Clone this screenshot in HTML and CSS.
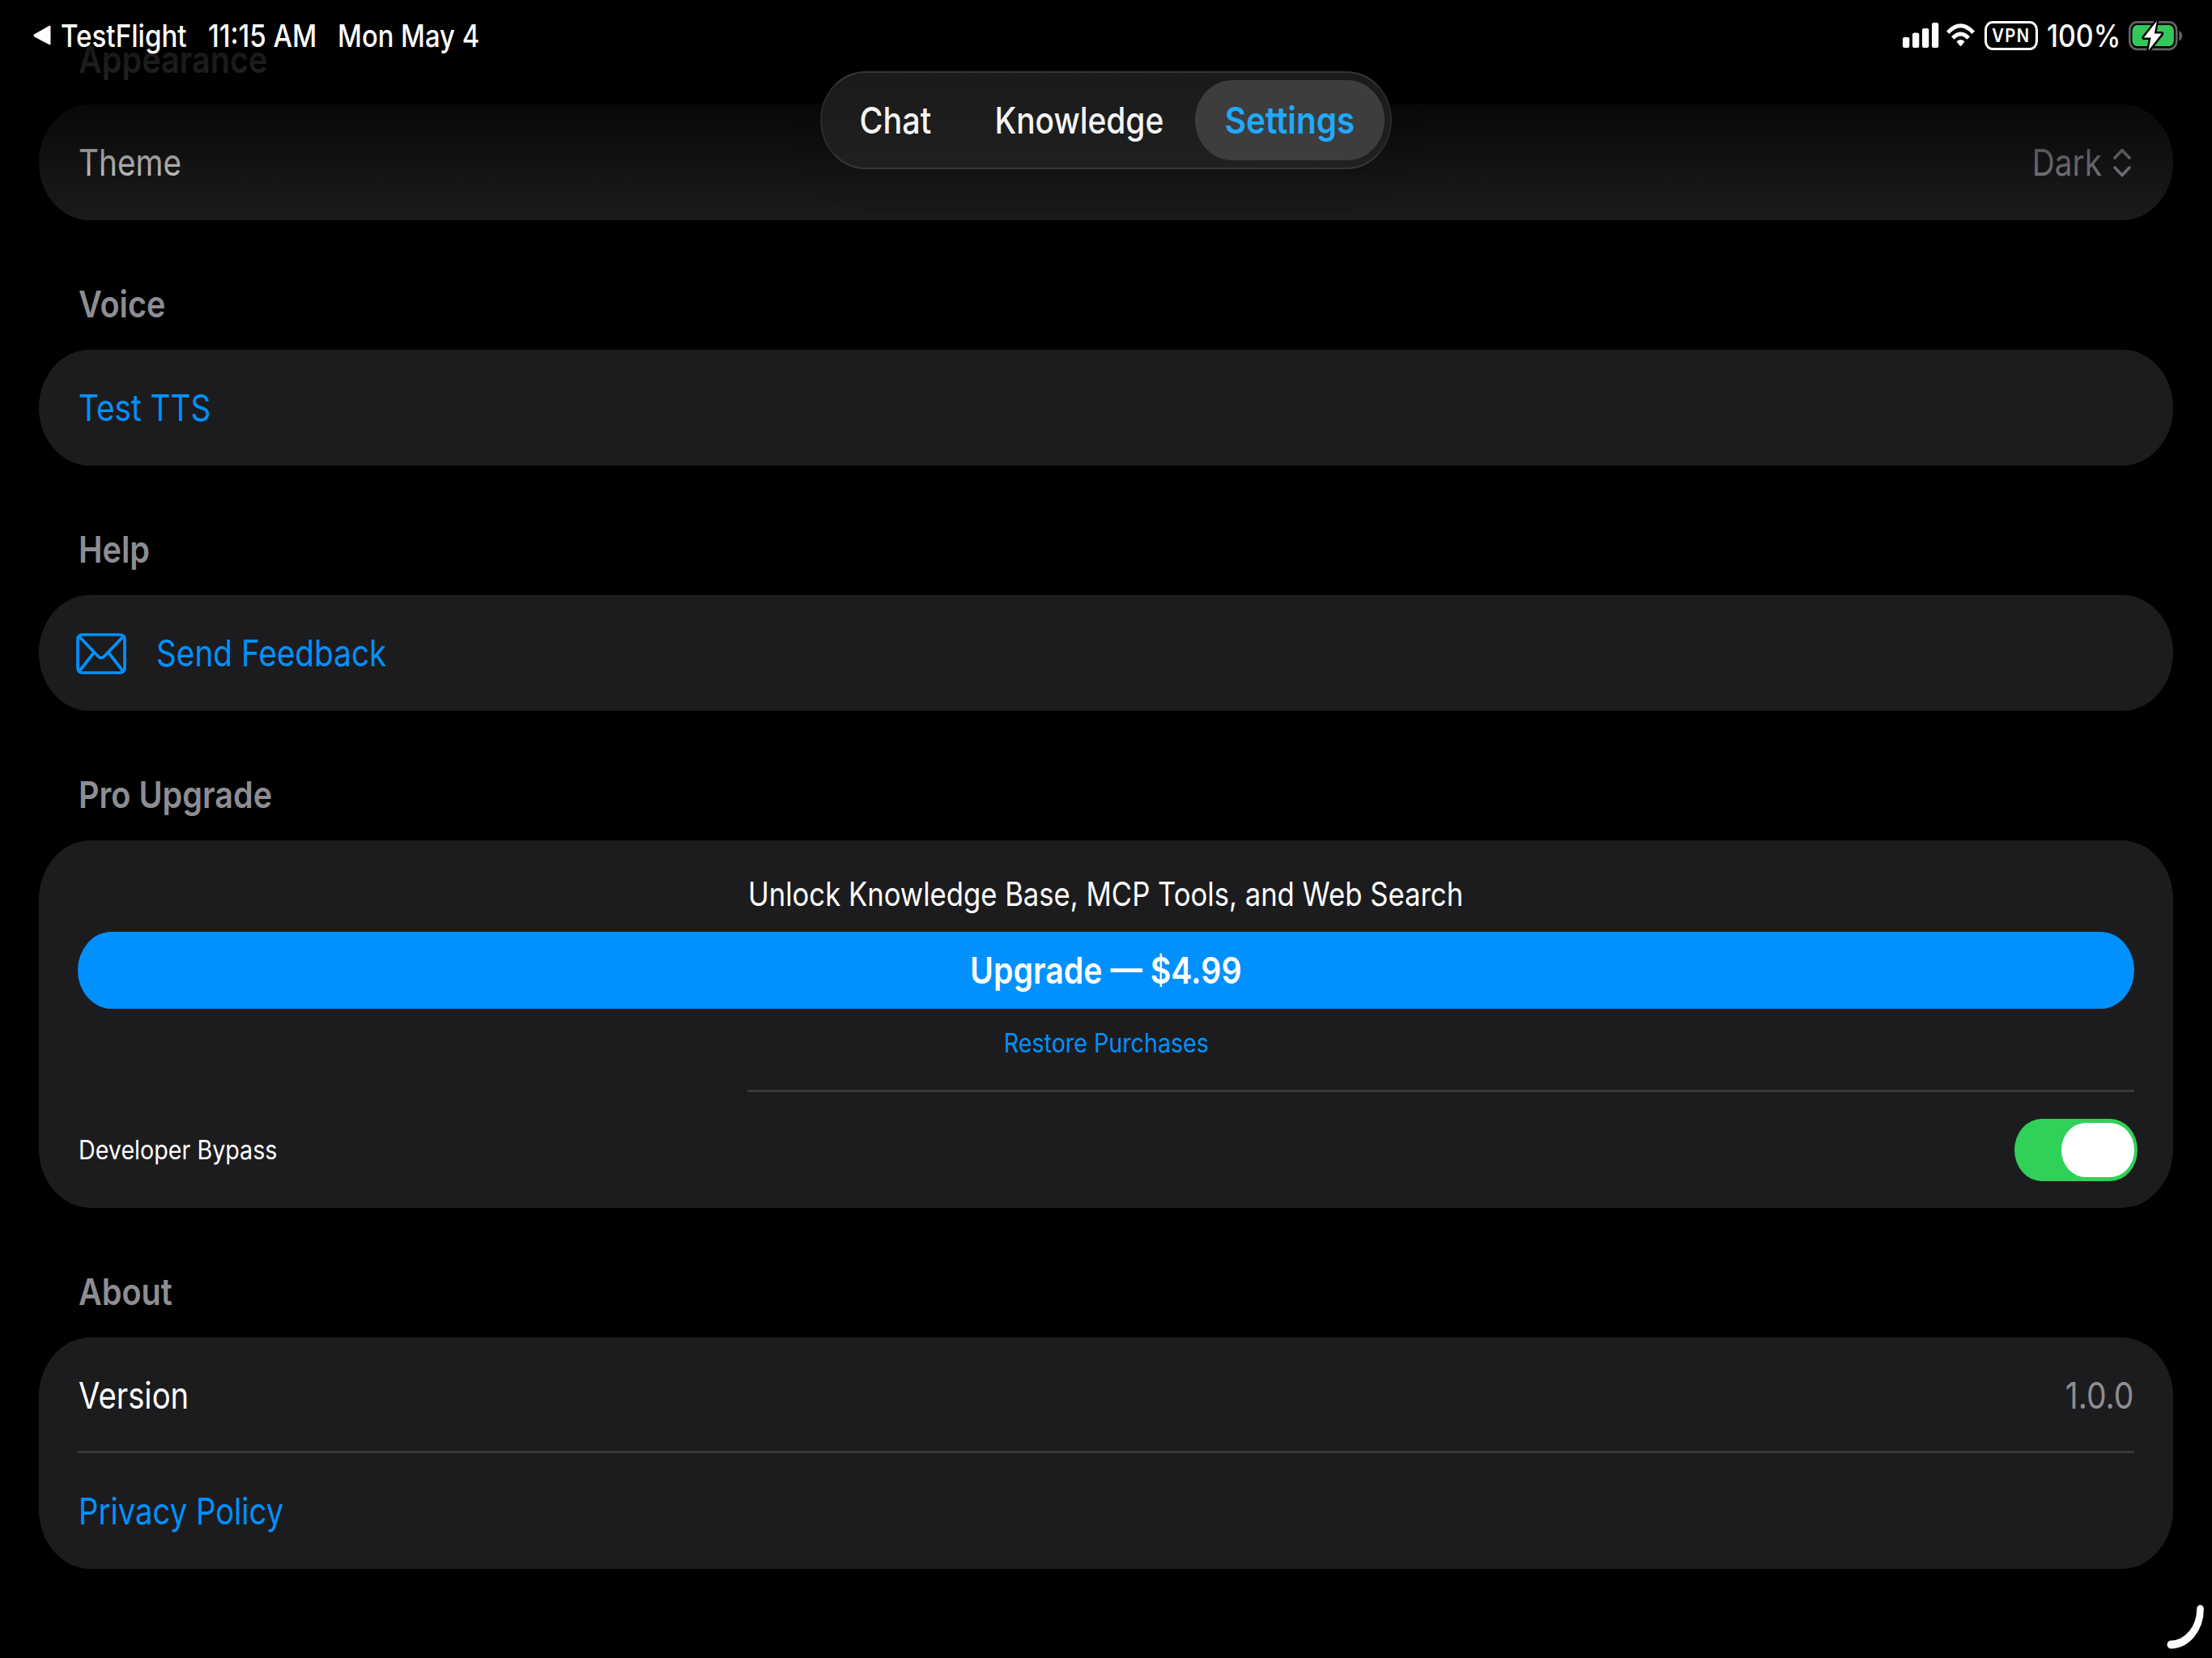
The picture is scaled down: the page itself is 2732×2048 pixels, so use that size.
FILE: index.html
```html
<!DOCTYPE html><html lang="en">
<head>
  <meta charset="UTF-8">
  <meta name="viewport" content="width=device-width, initial-scale=1.0">
  <title>Settings</title>
  <link rel="stylesheet" href="styles.css">
</head>
<body>
  <main class="settings">
    <h2 class="first"><span class="txt">Appearance</span></h2>
    <div class="card">
      <div class="row">
        <span class="txt body">Theme</span>
        <div class="picker">
          <span class="txt body end">Dark</span>
          <svg width="22" height="36" viewBox="0 0 22 36"><path d="M2 12L11 2.5L20 12M2 24L11 33.5L20 24"/></svg>
        </div>
      </div>
    </div>

    <h2><span class="txt">Voice</span></h2>
    <div class="card">
      <div class="row link"><span class="txt body">Test TTS</span></div>
    </div>

    <h2><span class="txt">Help</span></h2>
    <div class="card">
      <div class="row link feedback">
        <svg width="62" height="51" viewBox="0 0 62 51">
          <rect x="2" y="2" width="58" height="47" rx="5.5"/>
          <path d="M4.5 5L27 28.5Q31 33 35 28.5L57.5 5M22 24L4.5 46.5M40 24L57.5 46.5"/>
        </svg>
        <span class="txt body">Send Feedback</span>
      </div>
    </div>

    <h2><span class="txt">Pro Upgrade</span></h2>
    <div class="card pro">
      <p><span class="txt center">Unlock Knowledge Base, MCP Tools, and Web Search</span></p>
      <button class="upgrade"><span class="txt center">Upgrade — $4.99</span></button>
      <a class="restore"><span class="txt center small">Restore Purchases</span></a>
      <div class="line inset"></div>
      <div class="row bypass">
        <span class="txt small">Developer Bypass</span>
        <div class="toggle"><div class="knob"></div></div>
      </div>
    </div>

    <h2><span class="txt">About</span></h2>
    <div class="card about">
      <div class="row">
        <span class="txt body version">Version</span>
        <span class="txt end number">1.0.0</span>
      </div>
      <div class="line"></div>
      <div class="row link"><span class="txt body version">Privacy Policy</span></div>
    </div>
  </main>

  <div class="fade"></div>

  <header class="status">
    <div class="status-left">
      <svg width="22" height="26" viewBox="0 0 22 26"><path d="M21.5 1.8V23.2Q21.5 25 19.5 24L1.5 14.5Q-.5 12.8 1.5 11.2L19.5 .9Q21.5 0 21.5 1.8Z" fill="#fff"/></svg>
      <span class="txt">TestFlight</span>
      <span class="txt">11:15 AM</span>
      <span class="txt date">Mon May 4</span>
    </div>
    <div class="status-right">
      <svg width="45" height="32" viewBox="0 0 45 32" fill="#fff">
        <rect x="0" y="18" width="8.3" height="13" rx="2.2"/>
        <rect x="12" y="12.4" width="8.3" height="18.6" rx="2.2"/>
        <rect x="24" y="7" width="8.3" height="24" rx="2.2"/>
        <rect x="36" y="0" width="8.3" height="31" rx="2.2"/>
      </svg>
      <svg width="36" height="30" viewBox="0 0 36 30" fill="none" stroke="#fff" stroke-width="5">
        <path d="M1.8 11.2Q17.5 -5.6 33.2 11.2"/>
        <path d="M7.8 18Q17.5 7.8 27.2 18"/>
        <path d="M12.4 22.2Q17.5 17.8 22.6 22.2L18.4 27.4Q17.5 28.4 16.6 27.4Z" fill="#fff" stroke="none"/>
      </svg>
      <div class="vpn"><span class="txt center">VPN</span></div>
      <span class="txt percent">100%</span>
      <svg width="68" height="38" viewBox="0 0 68 38">
        <rect x="1.3" y="2.3" width="58" height="33.6" rx="9" ry="10" fill="none" stroke="#626264" stroke-width="2.7"/>
        <path d="M62.3 13C67.5 15 67.5 23.5 62.3 25.5Z" fill="#626264"/>
        <rect x="4.5" y="6" width="51.4" height="26" rx="6" ry="7" fill="#34c759"/>
        <path d="M34.8 1L18.8 21.6H27.6L24.6 37.2L40.8 16.6H31.8Z" fill="#fff" stroke="#000" stroke-width="5" paint-order="stroke" stroke-linejoin="round"/>
      </svg>
    </div>
  </header>

  <nav class="tabs">
    <a><span class="txt center chat">Chat</span></a>
    <a><span class="txt center">Knowledge</span></a>
    <a class="active"><span class="txt center">Settings</span></a>
  </nav>

  <svg class="corner" width="60" height="68" viewBox="0 0 24.9 24.7" preserveAspectRatio="none"><path d="M18.9 2.7A15.3 16 0 0 1 3.7 18.7"/></svg>
</body>
</html>
```
FILE: styles.css
```css
* { box-sizing: border-box; }
body {
  font-family: Inter, sans-serif;
  font-size: 45.4px;
  background: #000;
  color: #fff;
  margin: 0;
  width: 2732px;
  height: 2048px;
  position: relative;
  overflow: hidden;
}
svg { display: block; flex: none; }

/* condensed text */
.txt {
  --sx: 0.872;
  display: inline-block;
  white-space: nowrap;
  transform: scaleX(var(--sx));
  transform-origin: left center;
}
.txt.body { --sx: 0.853; }
.txt.version { --sx: 0.843; }
.txt.number { --sx: 0.86; }
.txt.small { --sx: 0.896; }
.txt.end { transform-origin: right center; }
.txt.center { transform-origin: center; }

.settings { padding: 0 48.3px; }
h2 {
  margin: 0;
  padding: 73.9px 49px 25.9px;
  font-size: 45.4px;
  line-height: 60px;
  font-weight: 600;
  color: #8d8d93;
}
h2.first { padding-top: 43.6px; }
.card {
  background: #1c1c1e;
  border-radius: 64px / 73px;
  padding: 0 48px;
}
.row {
  display: flex;
  align-items: center;
  justify-content: space-between;
  height: 143px;
}
.row > .txt:first-child { margin-left: 1px; }
.link { color: #0091ff; }
.picker {
  display: flex;
  align-items: center;
  gap: 13.5px;
  margin-right: 4px;
  color: #98989f;
}
.picker svg {
  fill: none;
  stroke: #98989f;
  stroke-width: 3.6;
  stroke-linecap: round;
  stroke-linejoin: round;
}
.feedback {
  justify-content: flex-start;
  gap: 37px;
  margin-left: -2.5px;
}
.feedback svg {
  fill: none;
  stroke: #0091ff;
  stroke-width: 3.7;
  margin-top: 1px;
}
.line {
  height: 3px;
  margin-top: -3px;
  background: #38383a;
}
.number { color: #8e8e90; }

.pro {
  display: flex;
  flex-direction: column;
  height: 454.5px;
  padding-top: 42.6px;
}
.pro p {
  margin: 0;
  text-align: center;
  font-size: 40.3px;
  line-height: 50px;
}
.pro p .txt { --sx: 0.86; }
.upgrade {
  margin: 20.3px 0 20.4px;
  padding: 0;
  height: 95.4px;
  border: none;
  border-radius: 42px / 47.7px;
  background: #0091ff;
  color: #fff;
  font: 600 45.4px Inter, sans-serif;
}
.upgrade .txt { --sx: 0.866; }
.restore {
  text-align: center;
  font-size: 32px;
  line-height: 44px;
  color: #0091ff;
}
.inset { margin: 35.3px 0 0 827px; }
.bypass { font-size: 32px; }
.toggle {
  width: 152px;
  height: 77.5px;
  margin-right: -4.5px;
  padding: 5.4px 4.6px;
  border-radius: 34px / 38.7px;
  background: #30d158;
}
.knob {
  width: 90px;
  height: 66.6px;
  margin-left: auto;
  border-radius: 30px / 33.3px;
  background: #fff;
}

.fade {
  position: absolute;
  inset: 0 0 auto 0;
  height: 300px;
  background: linear-gradient(rgba(0,0,0,.86) 0, rgba(0,0,0,.81) 75px, rgba(0,0,0,.7) 129px, rgba(0,0,0,.44) 185px, rgba(0,0,0,.27) 218px, rgba(0,0,0,.06) 272px, rgba(0,0,0,0) 300px);
}
.status {
  position: absolute;
  top: 0;
  left: 0;
  width: 2732px;
  height: 88.4px;
  padding: 0 36px 0 40.5px;
  display: flex;
  justify-content: space-between;
  align-items: center;
  font-size: 38px;
  font-weight: 500;
}
.status-left, .status-right {
  display: grid;
  align-items: center;
}
.status-left { grid-template-columns: 34.5px 182px 160px 199px; }
.status-left .date { --sx: 0.862; }
.status-right { grid-template-columns: 54.7px 46.3px 77px 101.5px 67px; }
.status-right .percent { --sx: 0.89; }
.vpn {
  width: 66px;
  height: 36.6px;
  border: 3.4px solid #fff;
  border-radius: 10px / 11px;
  display: flex;
  align-items: center;
  justify-content: center;
  font-size: 23px;
  font-weight: 600;
  letter-spacing: 1.5px;
}
.vpn .txt { --sx: 0.88; }

.tabs {
  position: absolute;
  top: 88px;
  left: 1013px;
  width: 706px;
  height: 121px;
  padding: 9px 7px;
  display: grid;
  grid-template-columns: 167.6px 286.4px 234px;
  font-weight: 500;
  border: 2px solid #363638;
  border-left-color: #2a2a2c;
  border-right-color: #2a2a2c;
  border-radius: 56px / 60.5px;
  background: linear-gradient(#1a1a1a, #202020);
  box-shadow: 0 10px 50px rgba(0,0,0,.12);
}
.tabs a {
  display: flex;
  align-items: center;
  justify-content: center;
  color: #f4f4f4;
}
.tabs .txt { --sx: 0.857; }
.tabs .chat { --sx: 0.872; }
.tabs .active {
  border-radius: 46px / 49.4px;
  background: #3d3d3d;
  color: #1faaff;
  font-weight: 600;
}
.tabs .active .txt { --sx: 0.892; }

.corner {
  position: absolute;
  left: 2672px;
  top: 1980px;
  fill: none;
  stroke: #fff;
  stroke-width: 3.6;
  stroke-linecap: round;
}
```
